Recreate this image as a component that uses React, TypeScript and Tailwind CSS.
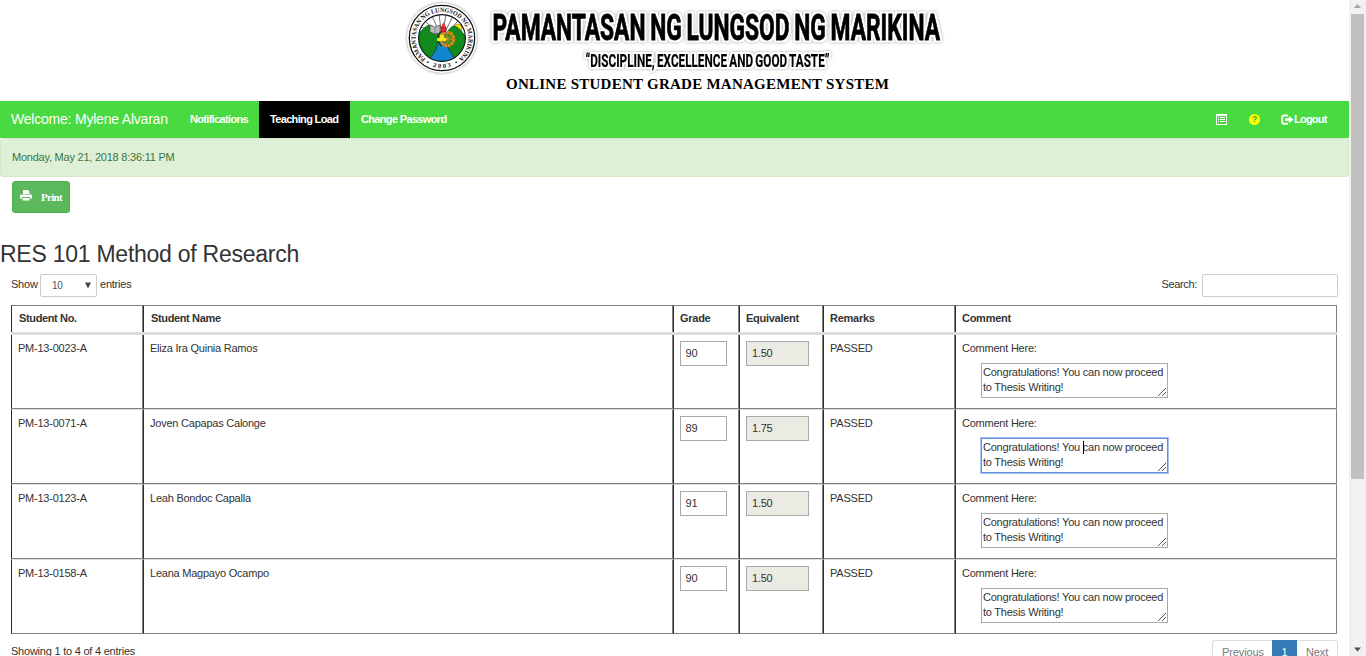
import React from "react";

const students = [
  { no: "PM-13-0023-A", name: "Eliza Ira Quinia Ramos", grade: "90", eq: "1.50" },
  { no: "PM-13-0071-A", name: "Joven Capapas Calonge", grade: "89", eq: "1.75", focused: true },
  { no: "PM-13-0123-A", name: "Leah Bondoc Capalla", grade: "91", eq: "1.50" },
  { no: "PM-13-0158-A", name: "Leana Magpayo Ocampo", grade: "90", eq: "1.50" },
];

const columns = ["Student No.", "Student Name", "Grade", "Equivalent", "Remarks", "Comment"];

function Seal() {
  return (
    <svg width="76" height="76" viewBox="-38 -38 76 76" className="block shrink-0">
      <defs>
        <clipPath id="inner"><circle r="23.4" /></clipPath>
        <path id="ring" d="M-15.5 21.5 A26.3 26.3 0 1 1 15.5 21.5" />
        <path id="ringBottom" d="M-17 25 A30.4 30.4 0 0 0 17 25" />
        <filter id="halo" x="-20%" y="-20%" width="140%" height="140%"><feGaussianBlur stdDeviation="1.2" /></filter>
      </defs>
      <circle r="35.5" fill="#aaa" filter="url(#halo)" />
      <circle r="35" fill="#fff" />
      <circle r="32.7" fill="#fff" stroke="#111" strokeWidth="1.3" />
      <circle r="23.4" fill="#fff" />
      <g clipPath="url(#inner)">
        <path d="M0 0L-22-12M0 0L-17-17M0 0L-10-22M0 0L-3-24M0 0L4-24M0 0L11-22M0 0L17-18M0 0L22-12" stroke="#333" strokeWidth=".7" />
        <circle cx="16" cy="-10" r="4" fill="#f8dc10" stroke="#9a8a20" strokeWidth=".6" />
        <path d="M-24 25V-3Q-17-13-12-13Q-5-11 0 5Q6-12 13-12Q19-9 24-1V25Z" fill="#108a1c" stroke="#063" strokeWidth=".7" />
        <path d="M-4 3H4L7 12L15 25H-15L-6 12Z" fill="#1185cf" stroke="#124" strokeWidth=".5" />
      </g>
      <circle r="23.4" fill="none" stroke="#111" strokeWidth="1.1" />
      <path d="M-12-13L-7-11L-2-13V-5L-7-4L-12-6Z" fill="#bbb" stroke="#555" strokeWidth=".7" />
      <path d="M-7-11V-4" stroke="#555" strokeWidth=".6" />
      <circle cx="5" cy="1" r="6.6" fill="none" stroke="#e48718" strokeWidth="3.4" strokeDasharray="2.8 .6" />
      <circle cx="5" cy="1" r="5" fill="#2c8a28" />
      <path d="M5-4V6M0 1H10M1.5-2.5L8.5 4.5M1.5 4.5L8.5-2.5" stroke="#e48718" strokeWidth="1" />
      <path d="M0-7A9 9 0 0 0 0 8" fill="none" stroke="#173b18" strokeWidth="1.5" />
      <rect x="-1" y="-11" width="5" height="5" fill="#e8262c" stroke="#700" strokeWidth=".5" />
      <path d="M-1-11L1.5-16L4-11" fill="#ef3838" />
      <path d="M-5 0H4V3H-5ZM-2-3H2V0H-2Z" fill="#f4e719" />
      <text fontFamily="Liberation Serif, serif" fontWeight="700" fontSize="6.5" letterSpacing="0" fill="#111">
        <textPath href="#ring" textLength="129" lengthAdjust="spacingAndGlyphs" startOffset="1">PAMANTASAN NG LUNGSOD NG MARIKINA</textPath>
      </text>
      <text fontFamily="Liberation Serif, serif" fontWeight="700" fontSize="6.5" letterSpacing="0" fill="#111">
        <textPath href="#ringBottom" textLength="34" startOffset="1">• 2003 •</textPath>
      </text>
    </svg>
  );
}

function Wordmark() {
  return (
    <svg width="466" height="76" viewBox="484 0 466 76" className="block shrink-0 overflow-visible">
      <defs>
        <filter id="outline" filterUnits="userSpaceOnUse" x="480" y="0" width="474" height="78" colorInterpolationFilters="sRGB">
          <feMorphology in="SourceAlpha" operator="dilate" radius="2" result="fat" />
          <feGaussianBlur in="fat" stdDeviation="0.6" result="edge" />
          <feGaussianBlur in="fat" stdDeviation="1.6" result="blurred" />
          <feFlood floodColor="#aaa" />
          <feComposite in2="blurred" operator="in" result="shadow" />
          <feFlood floodColor="#fff" />
          <feComposite in2="edge" operator="in" result="white" />
          <feMerge><feMergeNode in="shadow" /><feMergeNode in="white" /><feMergeNode in="SourceGraphic" /></feMerge>
        </filter>
      </defs>
      <g fontFamily="Roboto, sans-serif" fontWeight="700" letterSpacing="0" fill="#000" stroke="#000" filter="url(#outline)">
        <text x="492.5" y="39.5" fontSize="36" strokeWidth=".8" wordSpacing="-1.5" textLength="447.5" lengthAdjust="spacingAndGlyphs">PAMANTASAN NG LUNGSOD NG MARIKINA</text>
        <text x="585.5" y="66.7" fontSize="18" strokeWidth=".2" wordSpacing="-1" textLength="244" lengthAdjust="spacingAndGlyphs">“DISCIPLINE, EXCELLENCE AND GOOD TASTE”</text>
      </g>
    </svg>
  );
}

function Comment({ focused }: { focused?: boolean }) {
  return (
    <div className={`relative ml-[19px] mt-[7px] h-[35px] w-[187px] whitespace-nowrap border bg-white pl-px pt-px leading-[15px] ${focused ? "border-[#6590d8] shadow-[0_0_0_1px_#a4c2f2]" : "border-[#a9a9a9]"}`}>
      Congratulations! You can now proceed<br />to Thesis Writing!
      {focused && <span className="absolute left-[101px] top-[2px] h-[13px] w-px bg-black" />}
      <svg className="absolute bottom-px right-px" width="8" height="8" viewBox="0 0 8 8">
        <path d="M0 8L8 0M4 8L8 4" stroke="#555" strokeWidth="1" />
      </svg>
    </div>
  );
}

export default function App() {
  const cell = "border-l border-r border-l-[#2c2c2c] border-r-[#808080] align-top";
  return (
    <div className="flex h-[656px] w-[1366px] overflow-hidden bg-white font-['Liberation_Sans',Arial,sans-serif] text-[11px] leading-[15px] tracking-[-0.23px] text-[#333]">
      <main className="h-full w-[1349px] shrink-0 overflow-hidden">
        <header className="h-[101px]">
          <div className="flex h-[76px] pl-[404px]">
            <Seal />
            <div className="w-1 shrink-0" />
            <Wordmark />
          </div>
          <div className="pl-[506px] font-['Liberation_Serif',serif] text-[15px] font-bold leading-[17px] text-black">
            <span className="whitespace-nowrap tracking-[0.25px]">ONLINE STUDENT GRADE MANAGEMENT SYSTEM</span>
          </div>
        </header>

        <nav className="flex h-[37px] items-center whitespace-nowrap bg-[#49d940] font-bold tracking-[-0.66px] text-white">
          <span className="w-[190px] pl-[11px] text-[14px] font-normal tracking-[-0.21px]">Welcome: Mylene Alvaran</span>
          <span className="w-[69px]">Notifications</span>
          <span className="flex h-full w-[91px] items-center bg-black pl-[11px]">Teaching Load</span>
          <span className="pl-[11px]">Change Password</span>
          <div className="ml-auto flex items-center pr-[22px]">
            <svg width="12" height="12" viewBox="0 0 12 12" className="mr-[21px]" shapeRendering="crispEdges">
              <path d="M.5.5h10v10H.5z" fill="none" stroke="#fff" />
              <path d="M1 1.5h9M2 3.5h1M4 3.5h5M2 5.5h1M4 5.5h5M2 7.5h1M4 7.5h5" stroke="#fff" />
            </svg>
            <span className="mr-[21px] flex h-[11px] w-[11px] items-center justify-center rounded-full bg-[#ff0] text-[9px] leading-[11px] tracking-normal text-[#43a51b]">?</span>
            <svg width="13" height="12" viewBox="0 0 13 12">
              <path d="M7 1.5H3Q1.2 1.5 1.2 3V8Q1.2 9.8 3 9.8H7" fill="none" stroke="#fff" strokeWidth="1.9" />
              <path d="M4 4.3H8V2L12.5 5.7L8 9.3V7H4Z" fill="#fff" />
            </svg>
            <span className="w-[33px] tracking-[-0.78px]">Logout</span>
          </div>
        </nav>

        <div className="flex h-[39px] items-center rounded-[3px] border border-[#d6e9c6] bg-[#dff0d8] pl-[11px] text-[#3c763d]">
          <span>Monday, May 21, 2018 8:36:11 PM</span>
        </div>

        <div className="ml-3 mt-1 flex h-8 w-[58px] items-center rounded-[3px] border border-[#4cae4c] bg-[#5cb85c] pl-[7px] font-['Liberation_Serif',serif] text-white">
          <svg width="12" height="11" viewBox="0 0 12 11" className="-mt-[3px] mr-[9px]">
            <path d="M3 0H8L9.5 1.5V4H3ZM1 4.5H11Q12 4.5 12 5.5V8.5H10V7H2V8.5H0V5.5Q0 4.5 1 4.5ZM2.5 8H9.5V10.5H2.5Z" fill="#fff" />
          </svg>
          <span className="text-[11px] font-bold tracking-[-0.7px]">Print</span>
        </div>

        <h1 className="mt-[27px] h-[28px] whitespace-nowrap text-[23px] leading-[28px] tracking-[-0.25px]">RES 101 Method of Research</h1>

        <div className="mt-[6px] flex h-[23px] items-center justify-between pl-[11px] pr-[11px]">
          <div className="flex items-center">
            <span className="-mt-[2px] w-[29px]">Show</span>
            <span className="flex h-[23px] w-[57px] items-center justify-between rounded-[2px] border border-[#ccc] pl-[11px] pr-[5px] text-[10px] text-[#555]">
              10
              <svg width="6" height="7" viewBox="0 0 6 7"><path d="M0 .5H6L3 6.5Z" fill="#444" /></svg>
            </span>
            <span className="-mt-[2px] ml-[3px]">entries</span>
          </div>
          <div className="flex items-center">
            <span className="-mt-[2px] mr-[5px] tracking-[-0.35px]">Search:</span>
            <span className="h-[23px] w-[136px] rounded-[2px] border border-[#ccc]" />
          </div>
        </div>

        <table className="ml-[11px] mt-2 w-[1326px] table-fixed border-separate border-spacing-0">
          <colgroup>
            <col className="w-[132px]" />
            <col className="w-[530px]" />
            <col className="w-[66px]" />
            <col className="w-[84px]" />
            <col className="w-[132px]" />
            <col className="w-[382px]" />
          </colgroup>
          <thead>
            <tr className="h-[27px]">
              {columns.map((c, i) => (
                <th key={c} className={`${cell} border-t border-t-[#808080] p-0 pt-[5px] text-left font-bold ${i < 2 ? "pl-[7px] tracking-[-0.36px]" : "pl-[6px] tracking-[-0.27px]"}`}>{c}</th>
              ))}
            </tr>
            <tr className="h-[3px]"><td colSpan={6} className="h-[3px] bg-[#ddd] p-0" /></tr>
          </thead>
          <tbody>
            {students.map((s, i) => {
              const c = `${cell} border-b border-b-[#808080] p-0 pl-[6px] ${i > 0 ? "h-[75px] border-t border-t-[#ddd] pt-[6px]" : "h-[74px] pt-[6px]"}`;
              return (
                <tr key={s.no}>
                  <td className={c}>{s.no}</td>
                  <td className={c}>{s.name}</td>
                  <td className={c}>
                    <div className="flex h-[25px] w-[47px] items-center border border-[#a9a9a9] pl-[4.5px]">{s.grade}</div>
                  </td>
                  <td className={c}>
                    <div className="flex h-[25px] w-[63px] items-center border border-[#a9a9a9] bg-[#ebebe4] pl-[5px]">{s.eq}</div>
                  </td>
                  <td className={c}><span className="tracking-[-0.2px]">PASSED</span></td>
                  <td className={c}>
                    Comment Here:
                    <Comment focused={s.focused} />
                  </td>
                </tr>
              );
            })}
          </tbody>
        </table>

        <div className="flex justify-between pl-[11px] pr-[11px]">
          <span className="mt-[10px]">Showing 1 to 4 of 4 entries</span>
          <div className="mt-[6px] flex h-[25px] tracking-[-0.1px] text-[#777]">
            <span className="w-[60px] rounded-l-[3px] border border-r-0 border-[#ddd] pl-[9px] pt-1">Previous</span>
            <span className="w-[25px] bg-[#337ab7] pt-[5px] text-center text-white">1</span>
            <span className="w-[41px] rounded-r-[3px] border border-l-0 border-[#ddd] pl-[9px] pt-1">Next</span>
          </div>
        </div>
      </main>

      <aside className="flex h-full w-[17px] flex-col items-center bg-[#f1f1f1]">
        <svg width="17" height="14" viewBox="0 0 17 14" className="shrink-0"><path d="M5 8L8.5 4L12 8Z" fill="#a3a3a3" /></svg>
        <div className="h-[465px] w-[13px] shrink-0 bg-[#c1c1c1]" />
        <svg width="17" height="17" viewBox="0 0 17 17" className="mt-auto shrink-0"><path d="M5 8.5L8.5 12.5L12 8.5Z" fill="#505050" /></svg>
      </aside>
    </div>
  );
}
